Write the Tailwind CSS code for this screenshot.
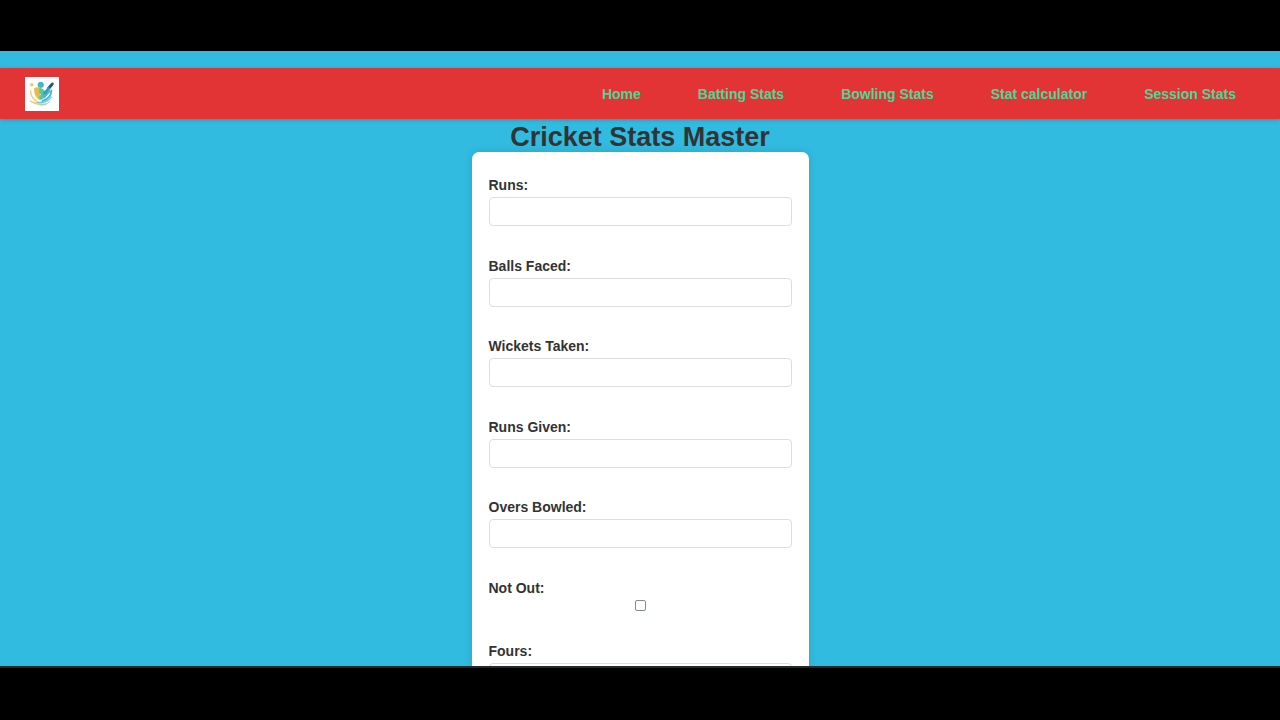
<!DOCTYPE html>
<html lang="en">
<head>
<meta charset="utf-8">
<meta name="viewport" content="width=device-width, initial-scale=1">
<title>Cricket Stats Master</title>
<script src="https://cdn.jsdelivr.net/npm/@tailwindcss/browser@4"></script>
</head>
<body class="flex h-screen flex-col bg-black pt-[51px] pb-[52px] font-['Liberation_Sans',Arial,sans-serif] text-[#333]">
<div class="min-h-0 flex-1 overflow-hidden border-b-2 border-[#222a2e] bg-[#31bbe0] pt-[17px]">
  <header class="flex h-[51px] items-center justify-between bg-[#e23434] pr-[44px] pl-[25px] shadow-[0_1px_4px_rgba(0,0,0,0.2)]">
    <a href="#" aria-label="Cricket Stats Master home" class="block size-[34px] bg-white">
      <svg viewBox="0 0 34 34" class="size-full" fill="none" stroke-linecap="round">
        <circle cx="6.8" cy="7.8" r="1.7" fill="#ecc66a"/>
        <path d="M9 11.5Q12 9.5 15.5 11V23.5Q9 20.5 9 11.5Z" fill="#e5bd48"/>
        <path d="M5.5 14Q5.8 21 12 24.5" stroke="#edca78" stroke-width="1.4"/>
        <path d="M5.5 24Q12 28.6 21 27" stroke="#ebc66d" stroke-width="1.5"/>
        <path d="M9 25Q14 27 18 26" stroke="#efd490" stroke-width="1"/>
        <circle cx="15.6" cy="8" r="3" fill="#45bfc8"/>
        <path d="M12.6 6.8Q15.5 3.6 18.5 6.5V10Z" fill="#39b6d8"/>
        <path d="M14.5 11Q18 11 20.5 15L18.5 21.5L15.5 23L14 20L16 17.5L14 15Z" fill="#56c79e"/>
        <path d="M18.5 14L22 15L24 12.5L25.5 14.5L19.5 21.5L17 19Z" fill="#43b8da"/>
        <path d="M27.3 7L23.5 11.5" stroke="#285b70" stroke-width="3"/>
        <path d="M23.5 11.5L20 16" stroke="#329ebf" stroke-width="2.8"/>
        <path d="M26.3 13.5Q26.5 21 17.5 24" stroke="#46b9d8" stroke-width="2"/>
        <path d="M26.3 20Q22.5 26.5 12.5 25.3" stroke="#67c5df" stroke-width="1.3"/>
        <path d="M15 28Q21 28.5 24.5 24.8" stroke="#8dd4e6" stroke-width="1"/>
      </svg>
    </a>
    <nav class="flex gap-[57px] text-[14px] leading-4 font-bold text-[#4bd896]">
      <a href="#">Home</a>
      <a href="#">Batting Stats</a>
      <a href="#">Bowling Stats</a>
      <a href="#">Stat calculator</a>
      <a href="#">Session Stats</a>
    </nav>
  </header>
  <main>
    <h1 class="pt-[3px] text-center text-[27px] leading-[30px] font-bold">Cricket Stats Master</h1>
    <form class="mx-auto w-[337px] rounded-[7px] bg-white px-[17px] pt-[25px] pb-6 text-[14px] leading-4 font-bold shadow-[0_0_9px_rgba(0,0,0,0.12)]">
      <div class="mb-8"><label for="runs" class="mb-1 block">Runs:</label><input id="runs" type="text" class="block h-[29px] w-full rounded-[4px] border border-[#ddd] px-2"></div>
      <div class="mb-[31px]"><label for="balls" class="mb-1 block">Balls Faced:</label><input id="balls" type="text" class="block h-[29px] w-full rounded-[4px] border border-[#ddd] px-2"></div>
      <div class="mb-8"><label for="wickets" class="mb-1 block">Wickets Taken:</label><input id="wickets" type="text" class="block h-[29px] w-full rounded-[4px] border border-[#ddd] px-2"></div>
      <div class="mb-[31px]"><label for="given" class="mb-1 block">Runs Given:</label><input id="given" type="text" class="block h-[29px] w-full rounded-[4px] border border-[#ddd] px-2"></div>
      <div class="mb-8"><label for="overs" class="mb-1 block">Overs Bowled:</label><input id="overs" type="text" class="block h-[29px] w-full rounded-[4px] border border-[#ddd] px-2"></div>
      <div class="mb-8"><label for="notout" class="mb-1 block">Not Out:</label><input id="notout" type="checkbox" class="mx-auto block size-[11px] appearance-none rounded-[2px] border border-[#818c9b] bg-white checked:bg-[#31bbe0]"></div>
      <div><label for="fours" class="mb-1 block">Fours:</label><input id="fours" type="text" class="block h-[29px] w-full rounded-[4px] border border-[#ddd] px-2"></div>
    </form>
  </main>
</div>
</body>
</html>
